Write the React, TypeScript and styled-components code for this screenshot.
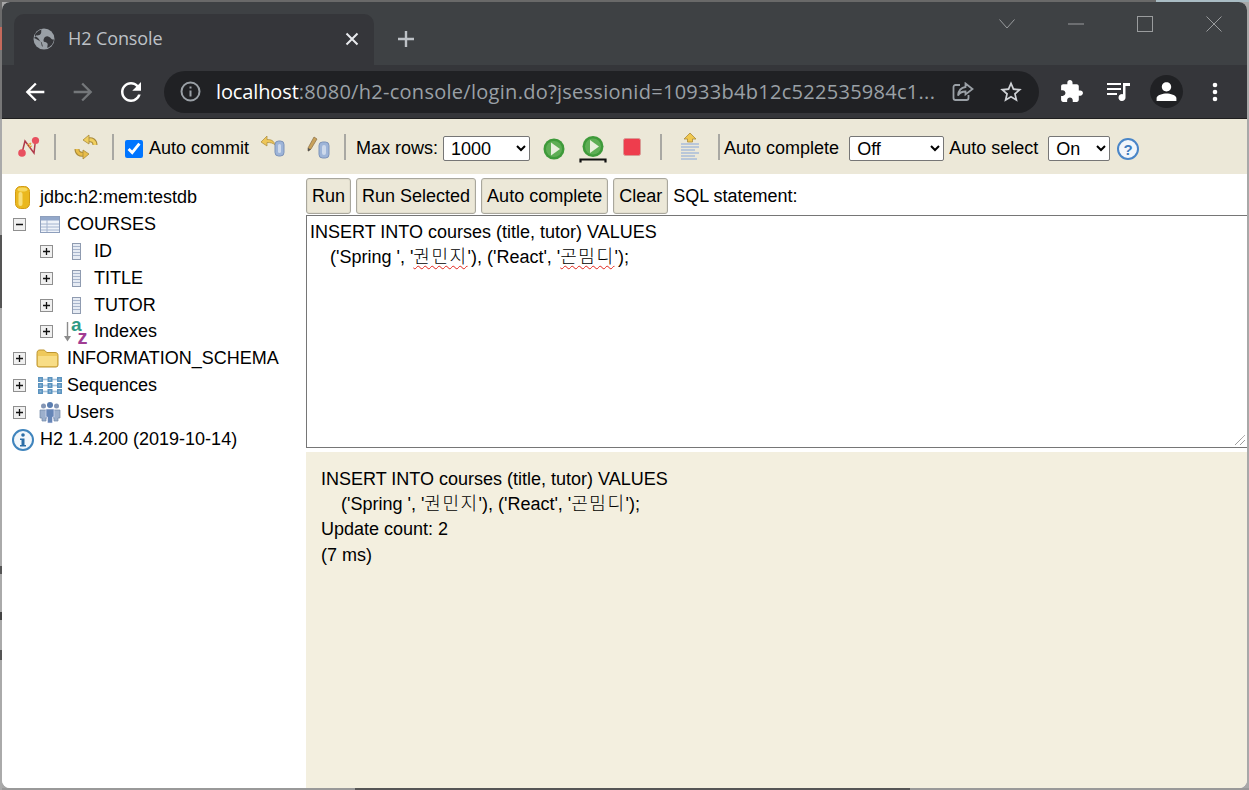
import React from "react";
import styled, { createGlobalStyle } from "styled-components";

const Global = createGlobalStyle`
  html, body { margin: 0; padding: 0; background: #aaa; }
  #root { width: 1249px; height: 790px; overflow: hidden; }
  * { box-sizing: border-box; }
`;

const KO = `"Liberation Sans", "Noto Sans CJK KR", sans-serif`;

const Screen = styled.div`
  width: 1249px;
  height: 790px;
  padding: 2px;
  background:
    linear-gradient(to right, #696969 0 1156px, #a9bcc4 1156px) top / 100% 2px no-repeat,
    linear-gradient(to bottom, #6b6b6b 0 27px, #c56a5c 27px 50px, #777 50px 119px, #aaa 119px 235px, #555 235px 308px, #aaa 308px 566px, #555 566px 574px, #aaa 574px 612px, #444 612px 620px, #aaa 620px 650px, #555 650px 660px, #aaa 660px) left / 2px 100% no-repeat,
    linear-gradient(to right, #999 0 355px, #555 355px 910px, #999 910px) bottom / 100% 2px no-repeat,
    #a8a8a8;
  overflow: hidden;
`;
const Win = styled.div`
  height: 100%;
  display: flex;
  flex-direction: column;
  border-radius: 8px;
  overflow: hidden;
  background: #fff;
`;
const TitleBar = styled.div`
  height: 63px;
  flex: none;
  display: flex;
  background: #3e4144;
  padding-left: 12px;
`;
const Tab = styled.div`
  width: 360px;
  height: 51px;
  margin-top: 12px;
  padding: 0 14px 2px 19px;
  display: flex;
  align-items: center;
  background: #35363a;
  border-radius: 10px 10px 0 0;
`;
const TabTitle = styled.span`
  margin: 0 0 1px 13px;
  flex: 1;
  font: 18px "Open Sans", sans-serif;
  letter-spacing: -0.1px;
  color: #bdc1c6;
`;
const NewTab = styled.div`
  width: 30px;
  height: 30px;
  margin: 22px 0 0 17px;
  display: flex;
  align-items: center;
  justify-content: center;
`;
const WinControls = styled.div`
  margin-left: auto;
  margin-right: -1px;
  display: flex;
  height: 44px;
  align-items: center;
`;
const WinButton = styled.div<{ $w: number }>`
  width: ${(p) => p.$w}px;
  display: flex;
  justify-content: center;
`;
const NavBar = styled.div`
  height: 54px;
  flex: none;
  display: flex;
  align-items: center;
  padding-left: 9px;
  background: #35363a;
  border-bottom: 1px solid #1f1f1f;
`;
const NavButton = styled.div<{ $w?: number }>`
  width: ${(p) => p.$w ?? 48}px;
  flex: none;
  display: flex;
  align-items: center;
  justify-content: center;
`;
const Omnibox = styled.div`
  width: 875px;
  height: 42px;
  margin: 0 8px 0 9px;
  padding-left: 16px;
  flex: none;
  display: flex;
  align-items: center;
  border-radius: 21px;
  background: #202124;
`;
const Url = styled.div`
  margin-left: 15px;
  width: 724px;
  flex: none;
  white-space: nowrap;
  overflow: hidden;
  font: 20px "Open Sans", sans-serif;
  letter-spacing: 0.28px;
  color: #9aa0a6;
  b {
    font-weight: 500;
    letter-spacing: -0.12px;
    color: #fff;
  }
`;
const OmniAction = styled.div<{ $ml: number }>`
  margin-left: ${(p) => p.$ml}px;
  display: flex;
`;
const Avatar = styled.div`
  width: 33px;
  height: 33px;
  border-radius: 50%;
  background: #202124;
  display: flex;
  align-items: center;
  justify-content: center;
`;

const Toolbar = styled.div`
  height: 55px;
  flex: none;
  display: flex;
  align-items: center;
  padding: 4px 0 0 12px;
  background: #ece8d8;
  font: 18px ${KO};
  color: #000;
`;
const ToolIcon = styled.span<{ $ml?: number; $mt?: number }>`
  margin-left: ${(p) => p.$ml ?? 0}px;
  margin-top: ${(p) => p.$mt ?? 0}px;
  flex: none;
  display: flex;
`;
const Sep = styled.span<{ $ml: number }>`
  width: 2px;
  height: 26px;
  margin: -3px 0 0 ${(p) => p.$ml}px;
  flex: none;
  background: #a9a8a3;
`;
const Check = styled.input`
  width: 18px;
  height: 18px;
  margin: 0 0 0 11px;
  flex: none;
  accent-color: #0075ff;
`;
const ToolLabel = styled.span<{ $ml: number }>`
  margin-left: ${(p) => p.$ml}px;
  white-space: nowrap;
  flex: none;
`;
const ToolSelect = styled.select<{ $w: number; $ml: number }>`
  width: ${(p) => p.$w}px;
  height: 25px;
  margin-left: ${(p) => p.$ml}px;
  flex: none;
  font: 18px ${KO};
  background: #fff;
  color: #000;
  border: 1px solid #767676;
  border-radius: 2px;
  padding: 0 0 0 3px;
`;

const Main = styled.div`
  flex: 1;
  min-height: 0;
  display: flex;
  font: 18px ${KO};
  color: #000;
`;
const Tree = styled.div`
  width: 304px;
  flex: none;
  padding-top: 9px;
  background: #fff;
`;
const TreeRow = styled.div<{ $indent: number; $h?: number }>`
  height: ${(p) => p.$h ?? 27}px;
  display: flex;
  align-items: center;
  padding-left: ${(p) => p.$indent}px;
  white-space: nowrap;
`;
const Expander = styled.span`
  width: 13px;
  height: 13px;
  margin-right: 10px;
  flex: none;
  display: flex;
`;
const TreeIcon = styled.span`
  width: 27px;
  height: 27px;
  flex: none;
  display: flex;
  align-items: center;
  justify-content: center;
`;
const TreeLabel = styled.span`
  margin-left: 4px;
`;
const Content = styled.div`
  flex: 1;
  min-width: 0;
  display: flex;
  flex-direction: column;
`;
const QueryBar = styled.div`
  height: 41px;
  flex: none;
  display: flex;
  align-items: center;
  gap: 5px;
  padding-top: 3px;
`;
const QueryButton = styled.button`
  height: 36px;
  padding: 0 5px;
  font: 18px ${KO};
  color: #000;
  background: #ece8d8;
  border: 1px solid #a9a79d;
  border-radius: 3px;
  box-shadow: inset 0 0 0 1px #e3dfcf;
`;
const QueryLabel = styled.span`
  margin-left: 0;
`;
const Editor = styled.div`
  position: relative;
  height: 233px;
  flex: none;
  padding: 4px 3px;
  border-top: 1.5px solid #767676;
  border-left: 1.5px solid #767676;
  border-bottom: 1.5px solid #767676;
  background: #fff;
  line-height: 25px;
  white-space: pre;
`;
const Typo = styled.span`
  text-decoration: underline wavy #e2231a 1px;
  text-underline-offset: 2px;
  font-weight: 300;
  letter-spacing: 1.5px;
`;
const Grip = styled.svg`
  position: absolute;
  right: 1px;
  bottom: 1px;
`;
const Result = styled.div`
  flex: 1;
  margin-top: 4px;
  padding: 15px 15px;
  background: #f3efdf;
  line-height: 25.2px;
  white-space: pre;
`;
const Thin = styled.span`
  font-weight: 300;
  letter-spacing: 1.5px;
`;

const Icon = {
  Globe: () => (
    <svg width="22" height="22" viewBox="0 0 22 22">
      <circle cx="11" cy="11" r="10.500" fill="#9aa0a6" />
      <path d="M9 1.500C6 2 3 4 1.800 7.500c1.500 1.500 3 2 4 3.500 1 1.200 1 3 3 3.400l1 4.200c-1.600-.3-1-3-2-4.600C6 12 3 11 1 10M12 9c2-1.600 4.400-.6 6 1.500 1 1.300 2 1 3 1-.5 4-3 7-6.500 8.500-.5-2.500 1-3.500-.5-5-1.500-1.300-3.500-.5-3.500-2.500 0-1.300.5-2.500 1.500-3.500z" fill="#35363a" />
      <path d="M8 1.800C8.500 4 8.500 6 6.500 7 4.500 7.500 3.500 8 2 6" fill="#35363a" />
    </svg>
  ),
  Close: () => (
    <svg width="16" height="16" viewBox="0 0 16 16">
      <path d="M2.500 2.500l11 11M13.500 2.500l-11 11" stroke="#e8eaed" strokeWidth="2" />
    </svg>
  ),
  Plus: () => (
    <svg width="20" height="20" viewBox="0 0 20 20">
      <path d="M10 2v16M2 10h16" stroke="#bdc1c6" strokeWidth="2.400" />
    </svg>
  ),
  Chevron: () => (
    <svg width="16" height="10" viewBox="0 0 16 10">
      <path d="M.5.5L8 9 15.500.5" fill="none" stroke="#9a9c9e" strokeWidth="1" />
    </svg>
  ),
  Min: () => (
    <svg width="16" height="4" viewBox="0 0 16 4">
      <path d="M0 2h16" stroke="#9a9c9e" strokeWidth="1" />
    </svg>
  ),
  Max: () => (
    <svg width="16" height="16" viewBox="0 0 16 16">
      <rect x=".5" y=".5" width="15" height="15" fill="none" stroke="#9a9c9e" />
    </svg>
  ),
  WinClose: () => (
    <svg width="16" height="16" viewBox="0 0 16 16">
      <path d="M.5.5l15 15M15.500.5l-15 15" stroke="#9a9c9e" />
    </svg>
  ),
  Back: ({ c = "#fff" }: { c?: string }) => (
    <svg width="28" height="28" viewBox="0 0 24 24" fill={c}>
      <path d="M20 11H7.830l5.590-5.590L12 4l-8 8 8 8 1.410-1.410L7.830 13H20v-2z" />
    </svg>
  ),
  Forward: () => (
    <svg width="28" height="28" viewBox="0 0 24 24" fill="#74777a">
      <path d="M12 4l-1.410 1.410L16.170 11H4v2h12.170l-5.580 5.590L12 20l8-8z" />
    </svg>
  ),
  Reload: () => (
    <svg width="30" height="30" viewBox="0 0 24 24" fill="#fff">
      <path d="M17.650 6.350C16.200 4.900 14.210 4 12 4c-4.420 0-7.990 3.580-7.990 8s3.570 8 7.990 8c3.730 0 6.840-2.550 7.730-6h-2.080c-.82 2.330-3.040 4-5.650 4-3.310 0-6-2.690-6-6s2.690-6 6-6c1.660 0 3.140.69 4.220 1.780L13 11h7V4l-2.350 2.350z" />
    </svg>
  ),
  InfoSmall: () => (
    <svg width="21" height="21" viewBox="0 0 21 21">
      <circle cx="10.500" cy="10.500" r="9" fill="none" stroke="#9aa0a6" strokeWidth="2" />
      <path d="M9.500 9.500h2v6h-2zM9.500 5.500h2v2h-2z" fill="#9aa0a6" />
    </svg>
  ),
  Share: () => (
    <svg width="22" height="20" viewBox="0 0 22 20" fill="none" stroke="#9aa0a6" strokeWidth="1.800">
      <path d="M8 3H3.500A2 2 0 0 0 1.500 5v11a2 2 0 0 0 2 2h11a2 2 0 0 0 2-2v-3" />
      <path d="M13.500 1.500l7 5.500-7 5.500V9.500c-3.500 0-6 1-7.500 4 .5-4.500 3-8 7.500-8.500z" />
    </svg>
  ),
  Star: () => (
    <svg width="26" height="26" viewBox="0 0 24 24" fill="#d0d3d7">
      <path d="M22 9.240l-7.190-.62L12 2 9.190 8.630 2 9.240l5.460 4.730L5.820 21 12 17.270 18.180 21l-1.630-7.030L22 9.240zM12 15.400l-3.760 2.270 1-4.280-3.320-2.880 4.380-.38L12 6.100l1.710 4.040 4.380.38-3.320 2.880 1 4.280L12 15.400z" />
    </svg>
  ),
  Puzzle: () => (
    <svg width="25" height="25" viewBox="0 0 24 24" fill="#fff">
      <path d="M20.500 11H19V7c0-1.100-.9-2-2-2h-4V3.500C13 2.120 11.880 1 10.500 1S8 2.120 8 3.500V5H4c-1.100 0-1.990.9-1.990 2v3.800H3.500c1.490 0 2.700 1.210 2.700 2.700s-1.210 2.700-2.700 2.700H2V20c0 1.100.9 2 2 2h3.800v-1.500c0-1.490 1.210-2.700 2.700-2.700 1.490 0 2.700 1.210 2.700 2.700V22H17c1.100 0 2-.9 2-2v-4h1.500c1.380 0 2.500-1.120 2.500-2.500S21.880 11 20.500 11z" />
    </svg>
  ),
  Queue: () => (
    <svg width="24" height="20" viewBox="0 0 24 20" fill="#fff">
      <path d="M0 1h14v2H0zM0 6h14v2H0zM0 11h10v2H0z" />
      <path d="M16 1h7v3h-4.500v11.500a3.500 3.500 0 1 1-2.500-3.300z" />
    </svg>
  ),
  Person: () => (
    <svg width="25" height="25" viewBox="0 0 24 24" fill="#fff">
      <path d="M12 12c2.610 0 4.500-2 4.500-4.500S14.610 3 12 3 7.500 5 7.500 7.500 9.390 12 12 12zm0 2c-3.500 0-9.500 1.500-9.500 4.500V21h19v-2.500c0-3-6-4.500-9.500-4.500z" />
    </svg>
  ),
  Dots: () => (
    <svg width="6" height="20" viewBox="0 0 6 20" fill="#fff">
      <circle cx="3" cy="3" r="2.300" />
      <circle cx="3" cy="10" r="2.300" />
      <circle cx="3" cy="17" r="2.300" />
    </svg>
  ),
  Connect: () => (
    <svg width="24" height="22" viewBox="0 0 24 22">
      <path d="M5 17L8 5l9 12 1.500-13" fill="none" stroke="#b03a4a" strokeWidth="1.500" />
      <path d="M10 9l4-2-2 4 3-1" fill="none" stroke="#e0a030" strokeWidth="1" />
      <circle cx="5" cy="17" r="3.800" fill="#e8505f" />
      <circle cx="18.500" cy="4.500" r="3.600" fill="#e8505f" />
    </svg>
  ),
  Refresh: () => (
    <svg width="24" height="26" viewBox="0 0 24 26" fill="none">
      <path d="M21 11c0-4-3-6-7-5" stroke="#a98a3a" strokeWidth="5" />
      <path d="M21 11c0-4-3-6-7-5" stroke="#f0cf60" strokeWidth="3" />
      <path d="M15 1l-6 5 6 4z" fill="#f0cf60" stroke="#a98a3a" strokeWidth=".8" />
      <path d="M3 15c0 4 3 6 7 5" stroke="#a98a3a" strokeWidth="5" />
      <path d="M3 15c0 4 3 6 7 5" stroke="#e8bd4a" strokeWidth="3" />
      <path d="M9 25l6-5-6-4z" fill="#e8bd4a" stroke="#a98a3a" strokeWidth=".8" />
    </svg>
  ),
  Rollback: () => (
    <svg width="26" height="22" viewBox="0 0 26 22">
      <path d="M1 7l6-6v3.500c4 0 7 1 8 5.500-2-2-4-2.500-8-2.500V11z" fill="#eec659" stroke="#a98a3a" strokeWidth=".7" />
      <rect x="15" y="6" width="9" height="15" rx="3.500" fill="#9db4d8" stroke="#7d93b8" />
      <rect x="18" y="9" width="3" height="9" rx="1.500" fill="#cdd9eb" />
    </svg>
  ),
  Commit: () => (
    <svg width="24" height="24" viewBox="0 0 24 24">
      <path d="M2 13L8 2l3 2-6 10-3 2z" fill="#c9a25a" stroke="#8a6f46" strokeWidth=".7" />
      <path d="M2 13l3 1.500-3 2z" fill="#555" />
      <rect x="13" y="7" width="10" height="16" rx="3.500" fill="#9db4d8" stroke="#7d93b8" />
      <rect x="16" y="10" width="4" height="10" rx="2" fill="#cdd9eb" />
    </svg>
  ),
  Play: () => (
    <svg width="22" height="22" viewBox="0 0 22 22">
      <circle cx="11" cy="11" r="10.500" fill="#3e9a3a" />
      <circle cx="11" cy="11" r="8" fill="#5eae55" />
      <path d="M8 4.500L17 11l-9 6.500z" fill="#e8efdc" />
    </svg>
  ),
  PlayBar: () => (
    <svg width="28" height="28" viewBox="0 0 28 28">
      <circle cx="14" cy="11.500" r="10.500" fill="#3e9a3a" />
      <circle cx="14" cy="11.500" r="8" fill="#5eae55" />
      <path d="M11 5l9 6.500-9 6.500z" fill="#e8efdc" />
      <path d="M1.500 27.500v-3h25v3" fill="none" stroke="#111" strokeWidth="2.200" />
    </svg>
  ),
  Stop: () => (
    <svg width="18" height="18" viewBox="0 0 18 18">
      <rect x=".5" y=".5" width="17" height="17" rx="2" fill="#ee3d4d" stroke="#d99a95" />
    </svg>
  ),
  History: () => (
    <svg width="20" height="30" viewBox="0 0 20 30">
      <path d="M10 1l6 6h-3.500v3h-5V7H4z" fill="#f0c850" stroke="#a98a3a" strokeWidth=".8" />
      <path d="M1 12h18M1 15h18M1 18h14M1 21h18M1 24h14M1 27h16" stroke="#a8bcd9" strokeWidth="1.300" />
    </svg>
  ),
  Help: () => (
    <svg width="24" height="24" viewBox="0 0 24 24">
      <circle cx="12" cy="12" r="10" fill="#f2f6fb" stroke="#4a86c8" strokeWidth="2" />
      <text x="12" y="17.500" textAnchor="middle" fontFamily="Liberation Sans" fontWeight="700" fontSize="15" fill="#3f7cc0">?</text>
    </svg>
  ),
  Database: () => (
    <svg width="15" height="23" viewBox="0 0 15 23">
      <rect x=".5" y=".5" width="14" height="22" rx="5" fill="#eab81f" stroke="#d29b14" />
      <ellipse cx="7.500" cy="3.500" rx="5" ry="2" fill="#f6d860" />
      <rect x="3.500" y="6" width="4" height="14" rx="2" fill="#f8df7c" />
    </svg>
  ),
  Table: () => (
    <svg width="20" height="17" viewBox="0 0 20 17">
      <rect x=".5" y=".5" width="19" height="16" fill="#eff3f9" stroke="#8e9fbc" />
      <rect x="1" y="1" width="18" height="3.500" fill="#93a8ca" />
      <path d="M1 8h18M1 11h18M1 14h18M7 4v12" stroke="#a4b4cf" />
    </svg>
  ),
  Plus2: ({ minus }: { minus?: boolean }) => (
    <svg width="13" height="13" viewBox="0 0 13 13">
      <rect x=".5" y=".5" width="12" height="12" fill="#f0f0f0" stroke="#8f8f8f" />
      <path d={minus ? "M3 6.500h7" : "M3 6.500h7M6.500 3v7"} stroke="#111" strokeWidth="1.300" />
    </svg>
  ),
  Column: () => (
    <svg width="9" height="17" viewBox="0 0 9 17">
      <rect x=".5" y=".5" width="8" height="16" fill="#e6ebf3" stroke="#8f9bb0" />
      <path d="M1 3.500h7M1 6.500h7M1 9.500h7M1 12.500h7" stroke="#a8b5cc" />
    </svg>
  ),
  Indexes: () => (
    <svg width="26" height="27" viewBox="0 0 26 27" overflow="visible">
      <path d="M3.500 4v16" stroke="#8c8c8c" strokeWidth="1.400" />
      <path d="M0 18l3.500 5.500L7 18z" fill="#8c8c8c" />
      <text x="7" y="13" fontFamily="Liberation Sans" fontWeight="700" fontSize="19" fill="#2f9a84">a</text>
      <text x="13.500" y="26" fontFamily="Liberation Sans" fontWeight="700" fontSize="20" fill="#a13d93">z</text>
    </svg>
  ),
  Folder: () => (
    <svg width="27" height="20" viewBox="0 0 27 20">
      <path d="M1 4.500C1 2 2 1 4 1h4c1 0 2 2.500 3 2.500h8c2 0 3 1 3 3V16a2 2 0 0 1-2 2H3a2 2 0 0 1-2-2z" fill="#efc95c" stroke="#bd9530" />
      <path d="M2 7h19v9a1 1 0 0 1-1 1H3a1 1 0 0 1-1-1z" fill="#f8dd86" />
    </svg>
  ),
  Sequences: () => (
    <svg width="24" height="17" viewBox="0 0 24 17">
      {[0, 6, 12].map((y) => (
        <React.Fragment key={y}>
          <path d={`M2 ${y + 2.5}h20`} stroke="#a9c4dc" strokeWidth="1.600" />
          <rect x="0" y={y} width="5" height="5" fill="#5b93bf" />
          <rect x="9.500" y={y} width="5" height="5" fill="#5b93bf" />
          <rect x="19" y={y} width="5" height="5" fill="#5b93bf" />
          <rect x="1.500" y={y + 1.500} width="2" height="2" fill="#8fb6d5" />
          <rect x="11" y={y + 1.500} width="2" height="2" fill="#8fb6d5" />
          <rect x="20.500" y={y + 1.500} width="2" height="2" fill="#8fb6d5" />
        </React.Fragment>
      ))}
    </svg>
  ),
  Users: () => (
    <svg width="22" height="23" viewBox="0 0 22 23">
      <circle cx="4.500" cy="5" r="2.500" fill="#8496b6" />
      <circle cx="17.500" cy="5" r="2.500" fill="#8496b6" />
      <path d="M1 9h7v8H7v3H3v-3H1zM14 9h7v8h-2v3h-4v-3h-1z" fill="#9cafcc" stroke="#7086a8" strokeWidth=".7" />
      <circle cx="11" cy="4" r="3" fill="#5a7db0" />
      <path d="M7 8h8v8h-1.500v6h-5v-6H7z" fill="#6585b6" stroke="#eef" strokeWidth=".6" />
    </svg>
  ),
  Info: () => (
    <svg width="24" height="24" viewBox="0 0 24 24">
      <circle cx="12" cy="12" r="10" fill="#f2f7fb" stroke="#3f84bd" strokeWidth="2" />
      <circle cx="12" cy="7" r="1.800" fill="#2a6da6" />
      <path d="M9 10.500h4.500V17H15v1.500H9V17h1.500v-5H9z" fill="#2a6da6" />
    </svg>
  ),
};

const Expand = ({ minus }: { minus?: boolean }) => (
  <Expander>
    <Icon.Plus2 minus={minus} />
  </Expander>
);

export default function App() {
  return (
    <Screen>
      <Global />
      <Win>
        <TitleBar>
          <Tab>
            <Icon.Globe />
            <TabTitle>H2 Console</TabTitle>
            <Icon.Close />
          </Tab>
          <NewTab>
            <Icon.Plus />
          </NewTab>
          <WinControls>
            <WinButton $w={69}><Icon.Chevron /></WinButton>
            <WinButton $w={69}><Icon.Min /></WinButton>
            <WinButton $w={69}><Icon.Max /></WinButton>
            <WinButton $w={69}><Icon.WinClose /></WinButton>
          </WinControls>
        </TitleBar>
        <NavBar>
          <NavButton><Icon.Back /></NavButton>
          <NavButton><Icon.Forward /></NavButton>
          <NavButton><Icon.Reload /></NavButton>
          <Omnibox>
            <Icon.InfoSmall />
            <Url><b>localhost</b>:8080/h2-console/login.do?jsessionid=10933b4b12c522535984c1...</Url>
            <OmniAction $ml={12}><Icon.Share /></OmniAction>
            <OmniAction $ml={24}><Icon.Star /></OmniAction>
          </Omnibox>
          <NavButton $w={48}><Icon.Puzzle /></NavButton>
          <NavButton $w={48}><Icon.Queue /></NavButton>
          <NavButton $w={46}><Avatar><Icon.Person /></Avatar></NavButton>
          <NavButton $w={52}><Icon.Dots /></NavButton>
        </NavBar>
        <Toolbar>
          <ToolIcon $ml={3} $mt={-4}><Icon.Connect /></ToolIcon>
          <Sep $ml={13} />
          <ToolIcon $ml={18} $mt={-4}><Icon.Refresh /></ToolIcon>
          <Sep $ml={14} />
          <Check type="checkbox" defaultChecked />
          <ToolLabel $ml={6}>Auto commit</ToolLabel>
          <ToolIcon $ml={11} $mt={-5}><Icon.Rollback /></ToolIcon>
          <ToolIcon $ml={20} $mt={-4}><Icon.Commit /></ToolIcon>
          <Sep $ml={14} />
          <ToolLabel $ml={10}>Max rows:</ToolLabel>
          <ToolSelect $w={87} $ml={5} defaultValue="1000">
            <option>1000</option>
          </ToolSelect>
          <ToolIcon $ml={13}><Icon.Play /></ToolIcon>
          <ToolIcon $ml={14}><Icon.PlayBar /></ToolIcon>
          <ToolIcon $ml={16} $mt={-3}><Icon.Stop /></ToolIcon>
          <Sep $ml={19} />
          <ToolIcon $ml={18} $mt={-3}><Icon.History /></ToolIcon>
          <Sep $ml={18} />
          <ToolLabel $ml={4}>Auto complete</ToolLabel>
          <ToolSelect $w={95} $ml={10} defaultValue="Off">
            <option>Off</option>
          </ToolSelect>
          <ToolLabel $ml={5}>Auto select</ToolLabel>
          <ToolSelect $w={62} $ml={10} defaultValue="On">
            <option>On</option>
          </ToolSelect>
          <ToolIcon $ml={6}><Icon.Help /></ToolIcon>
        </Toolbar>
        <Main>
          <Tree>
            <TreeRow $indent={7} $h={28}><TreeIcon><Icon.Database /></TreeIcon><TreeLabel>jdbc:h2:mem:testdb</TreeLabel></TreeRow>
            <TreeRow $indent={11}><Expand minus /><TreeIcon><Icon.Table /></TreeIcon><TreeLabel>COURSES</TreeLabel></TreeRow>
            <TreeRow $indent={38}><Expand /><TreeIcon><Icon.Column /></TreeIcon><TreeLabel>ID</TreeLabel></TreeRow>
            <TreeRow $indent={38}><Expand /><TreeIcon><Icon.Column /></TreeIcon><TreeLabel>TITLE</TreeLabel></TreeRow>
            <TreeRow $indent={38} $h={26}><Expand /><TreeIcon><Icon.Column /></TreeIcon><TreeLabel>TUTOR</TreeLabel></TreeRow>
            <TreeRow $indent={38}><Expand /><TreeIcon><Icon.Indexes /></TreeIcon><TreeLabel>Indexes</TreeLabel></TreeRow>
            <TreeRow $indent={11}><Expand /><TreeIcon><Icon.Folder /></TreeIcon><TreeLabel>INFORMATION_SCHEMA</TreeLabel></TreeRow>
            <TreeRow $indent={11}><Expand /><TreeIcon><Icon.Sequences /></TreeIcon><TreeLabel>Sequences</TreeLabel></TreeRow>
            <TreeRow $indent={11}><Expand /><TreeIcon><Icon.Users /></TreeIcon><TreeLabel>Users</TreeLabel></TreeRow>
            <TreeRow $indent={7}><TreeIcon><Icon.Info /></TreeIcon><TreeLabel>H2 1.4.200 (2019-10-14)</TreeLabel></TreeRow>
          </Tree>
          <Content>
            <QueryBar>
              <QueryButton>Run</QueryButton>
              <QueryButton>Run Selected</QueryButton>
              <QueryButton>Auto complete</QueryButton>
              <QueryButton>Clear</QueryButton>
              <QueryLabel>SQL statement:</QueryLabel>
            </QueryBar>
            <Editor>
              {"INSERT INTO courses (title, tutor) VALUES\n    ('Spring ', '"}
              <Typo>권민지</Typo>
              {"'), ('React', '"}
              <Typo>곤밈디</Typo>
              {"');"}
              <Grip width="12" height="12" viewBox="0 0 12 12">
                <path d="M1 11L11 1M6 11l5-5" stroke="#777" strokeWidth="1" strokeDasharray="1 .5" />
              </Grip>
            </Editor>
            <Result>
              {"INSERT INTO courses (title, tutor) VALUES\n    ('Spring ', '"}
              <Thin>권민지</Thin>
              {"'), ('React', '"}
              <Thin>곤밈디</Thin>
              {"');\nUpdate count: 2\n(7 ms)"}
            </Result>
          </Content>
        </Main>
      </Win>
    </Screen>
  );
}
